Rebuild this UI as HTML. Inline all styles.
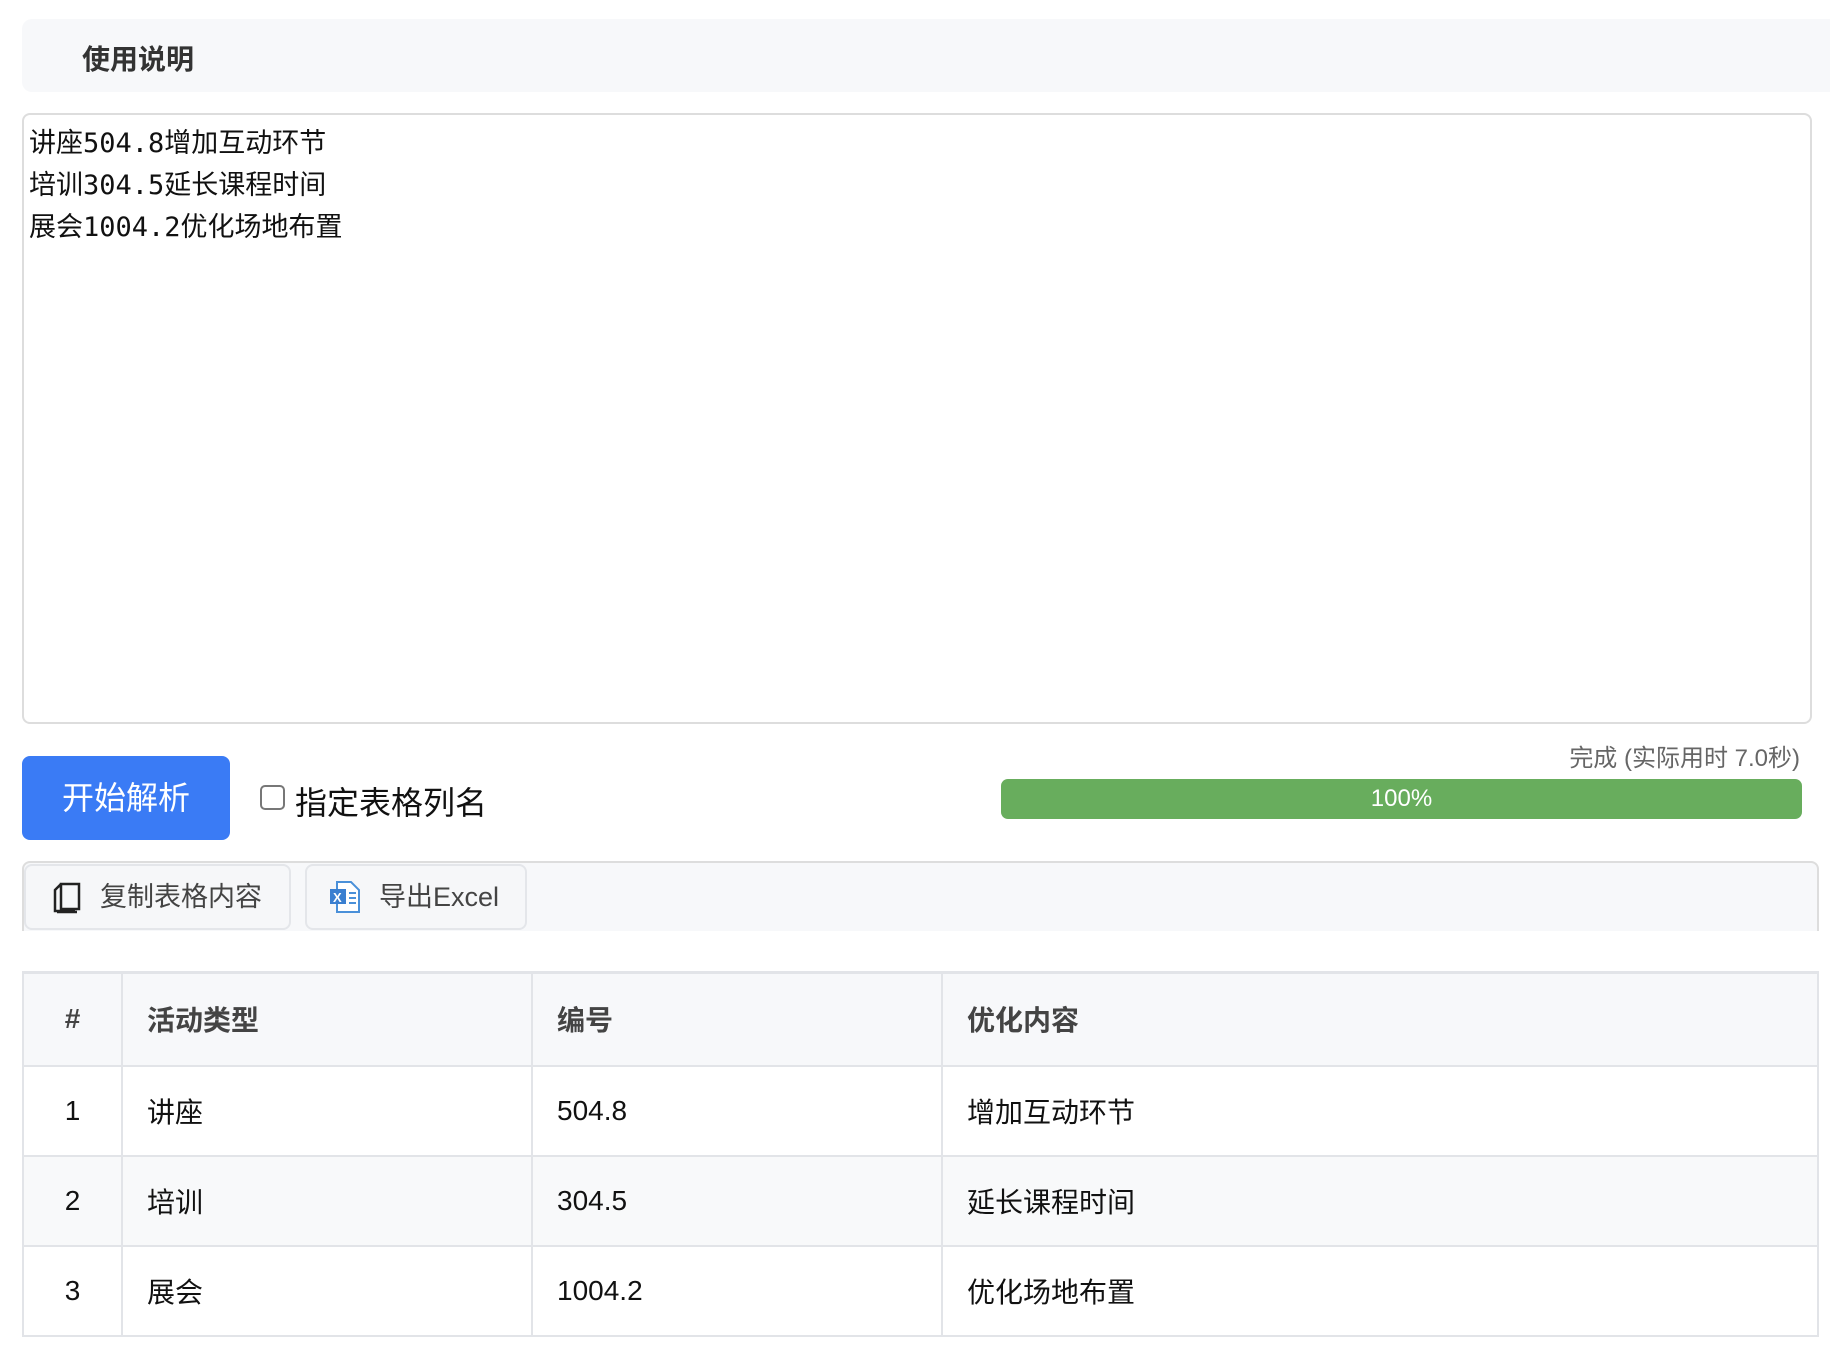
<!DOCTYPE html>
<html><head><meta charset="utf-8"><style>
*{box-sizing:border-box;margin:0;padding:0}
body{width:1830px;height:1348px;background:#fff;font-family:"Liberation Sans","Noto Sans CJK SC",sans-serif;position:relative;overflow:hidden;color:#222}
.abs{position:absolute}
.hdr{left:22px;top:19px;width:1830px;height:73px;background:#f7f8fa;border-radius:10px}
.hdr span{position:absolute;left:60px;top:19px;font-size:28px;font-weight:bold;color:#333}
.ta{left:22px;top:113px;width:1790px;height:611px;border:2px solid #ddd;border-radius:8px;padding:8px 5px;font-family:"DejaVu Sans Mono","Noto Sans CJK SC",monospace;font-size:27px;line-height:42px;color:#111;white-space:pre}
.btn{left:22px;top:756px;width:208px;height:84px;background:#3a7bf5;border-radius:8px;color:#fff;font-size:32px;text-align:center;line-height:84px}
.cb{left:260px;top:785px;width:25px;height:25px;border:2px solid #777;border-radius:5px}
.lbl{left:295px;top:778px;font-size:32px;color:#111}
.st{right:30px;top:738px;font-size:24px;color:#666}
.pg{left:1001px;top:779px;width:801px;height:40px;background:#68ad5d;border-radius:7px;color:#fff;font-size:24px;text-align:center;line-height:40px}
.tb{left:22px;top:861px;width:1797px;height:70px;background:#f7f8fa;border:2px solid #ddd;border-bottom:none;border-radius:8px 8px 0 0}
.b{top:864px;height:66px;border:2px solid #e4e6ea;border-radius:8px;background:#f6f7f9;font-size:27px;color:#444;line-height:62px}
table{position:absolute;left:22px;top:971px;width:1797px;border-collapse:collapse;border-top:3px solid #e2e4e8;font-size:28px}
td,th{border:2px solid #e2e4e8;height:90px;padding:0 24px;text-align:left;color:#111}
th{height:93px;background:#f7f8fa;color:#444;font-weight:bold}
tr.g td{background:#f8f9fa}
td:first-child,th:first-child{text-align:center;width:99px;padding:0}
</style></head><body>
<div class="abs hdr"><span>使用说明</span></div>
<div class="abs ta">讲座504.8增加互动环节
培训304.5延长课程时间
展会1004.2优化场地布置</div>
<div class="abs btn">开始解析</div>
<div class="abs cb"></div>
<div class="abs lbl">指定表格列名</div>
<div class="abs st">完成 (实际用时 7.0秒)</div>
<div class="abs pg">100%</div>
<div class="abs tb"></div>
<div class="abs b" style="left:24px;width:267px;padding-left:74px">复制表格内容
<svg class="abs" style="left:26px;top:16px" width="30" height="32" viewBox="0 0 30 32"><path d="M9 2h18v25H9z M9 2L3 8v21h20" fill="none" stroke="#222" stroke-width="2.5"/><path d="M5 30h20" stroke="#222" stroke-width="2.5"/></svg></div>
<div class="abs b" style="left:305px;width:222px;padding-left:72px">导出Excel
<svg class="abs" style="left:22px;top:14px" width="32" height="34" viewBox="0 0 32 34"><path d="M8 2h14l8 8v22H8z" fill="#fff" stroke="#4a90d9" stroke-width="2"/><rect x="1" y="9" width="16" height="15" fill="#3a7fd0"/><text x="4" y="22" font-size="13" font-weight="bold" fill="#fff" font-family="Liberation Sans">X</text><path d="M20 13h7M20 18h7M20 23h7" stroke="#4a90d9" stroke-width="2"/></svg></div>
<table>
<tr><th>#</th><th style="width:410px">活动类型</th><th style="width:410px">编号</th><th>优化内容</th></tr>
<tr><td>1</td><td>讲座</td><td>504.8</td><td>增加互动环节</td></tr>
<tr class="g"><td>2</td><td>培训</td><td>304.5</td><td>延长课程时间</td></tr>
<tr><td>3</td><td>展会</td><td>1004.2</td><td>优化场地布置</td></tr>
</table>
</body></html>
